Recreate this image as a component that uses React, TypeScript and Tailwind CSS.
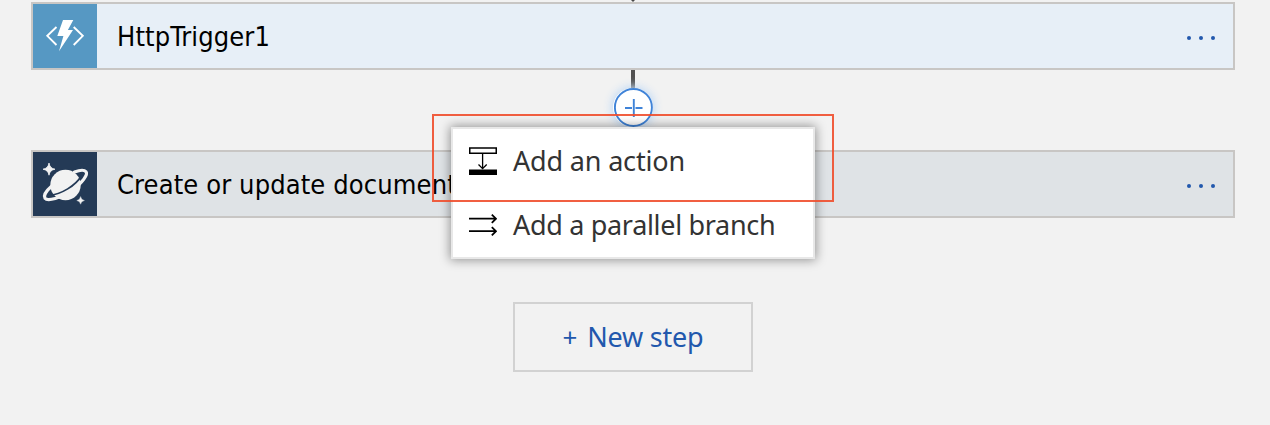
import React from "react";

function FunctionIcon() {
  return (
    <svg viewBox="0 0 64 64" className="h-16 w-16 shrink-0 bg-[#5698c3]">
      <path d="M23.5 23 14.3 31.8 23.5 41M40.7 23 49.8 31.8 40.7 41" fill="none" stroke="#fff" strokeWidth="1.9" />
      <path d="M30 16H40.3L34.9 26H40L26 47.3 30.4 32H24.3Z" fill="#fff" />
    </svg>
  );
}

function CosmosIcon() {
  return (
    <svg viewBox="0 0 64 64" className="h-16 w-16 shrink-0 bg-[#243a56]">
      <circle cx="32.5" cy="33" r="15.2" fill="#f2f2f2" />
      <path d="M16 43.500C28 42.500 43 33.500 48.500 23.500" fill="none" stroke="#243a56" strokeWidth="1.700" />
      <path
        d="M18.300 34.500C13 39 10.300 43.800 12 46.300C14.500 49.500 28 46 38.500 38.800C49.500 31 55.200 22.500 53 19.800C51.300 17.700 46 18.300 41.500 20"
        fill="none"
        stroke="#f2f2f2"
        strokeWidth="3.200"
        strokeLinecap="round"
      />
      <path d="M16 11Q16.8 16.4 22 17.2Q16.8 18 16 23.2Q15.200 18 10 17.2Q15.200 16.400 16 11Z" fill="#f2f2f2" stroke="#f2f2f2" strokeWidth=".8" />
      <path d="M47.600 44.600Q48.200 48 51.400 48.500Q48.200 49 47.600 52.200Q47 49 43.800 48.500Q47 48 47.600 44.600Z" fill="#f2f2f2" stroke="#f2f2f2" strokeWidth=".4" />
    </svg>
  );
}

function Dots() {
  return (
    <button aria-label="More" className="mr-[18px] mt-1 flex gap-2">
      <span className="h-1 w-1 rounded-full bg-[#2258ad]" />
      <span className="h-1 w-1 rounded-full bg-[#2258ad]" />
      <span className="h-1 w-1 rounded-full bg-[#2258ad]" />
    </button>
  );
}

function Step({ icon, title, tone }: { icon: React.ReactNode; title: string; tone: string }) {
  return (
    <div className={`flex h-[68px] w-[1204px] items-center border-2 border-[#c8c6c4] ${tone}`}>
      {icon}
      <div className="ml-5 flex-1 whitespace-nowrap pt-0.5 font-['DejaVu_Sans_Condensed','DejaVu_Sans',sans-serif] text-[27px] leading-8 tracking-[0.12px] text-black [font-stretch:condensed]">
        {title}
      </div>
      <Dots />
    </div>
  );
}

function ActionIcon() {
  return (
    <svg viewBox="0 0 28 28" className="h-7 w-7 shrink-0" fill="none" stroke="#000">
      <path d="M.75 1H27.250V6.250H.75Z" strokeWidth="1.500" />
      <path d="M13.600 7V21.500M9.500 17.500 13.600 21.600 17.700 17.500" strokeWidth="1.300" />
      <path d="M0 22.500H28V28H0Z" fill="#000" stroke="none" />
    </svg>
  );
}

function ParallelIcon() {
  return (
    <svg viewBox="0 0 28 28" className="h-7 w-7 shrink-0" fill="none" stroke="#000" strokeWidth="1.800">
      <path d="M0 7.700H27M22.800 3.600 27 7.700 22.800 11.800M0 20.200H27M22.800 16.100 27 20.200 22.800 24.300" />
    </svg>
  );
}

export default function App() {
  return (
    <main className="relative flex h-[425px] w-[1270px] flex-col items-start overflow-hidden bg-[#f2f2f2] pl-[31px] font-['Noto_Sans',sans-serif]">
      <svg viewBox="0 0 6 2" className="ml-[599px] h-0.5 w-1.5">
        <path d="M1 0H5L3 2Z" fill="#484848" />
      </svg>
      <Step icon={<FunctionIcon />} title="HttpTrigger1" tone="bg-[#e7eff7]" />
      <div className="flex h-20 w-[1204px] flex-col items-center">
        <div className="h-[18px] w-1 bg-[#515151]" />
        <div className="flex h-[39px] w-10 items-center justify-center rounded-full bg-white shadow-[0_0_8px_2px_#c5dcf5]">
          <svg viewBox="0 0 40 39" className="h-[39px] w-10" fill="none" stroke="#3f83d8">
            <circle cx="20.400" cy="19.500" r="18.500" strokeWidth="1.900" fill="#fff" />
            <path d="M12 20H19M22.500 20H29.500M20.800 11V29" strokeWidth="1.900" />
          </svg>
        </div>
      </div>
      <Step icon={<CosmosIcon />} title="Create or update document" tone="bg-[#dfe3e6]" />
      <button className="ml-[482px] mt-[84px] flex h-[70px] w-60 shrink-0 items-center justify-center gap-2.5 border-2 border-[#d2d2d2] text-[27px] tracking-[-0.2px] text-[#2258ad]">
        <span className="text-[26px]">+</span>
        <span>New step</span>
      </button>

      <div className="absolute left-[451px] top-[127px] h-[132px] w-[364px] border-2 border-[#e8e8e8] bg-white text-[27px] leading-8 text-[#333] shadow-[0_0_10px_1px_rgba(0,0,0,0.4)]">
        <div className="flex h-16 items-center gap-4 pl-4">
          <ActionIcon />
          <span className="whitespace-nowrap tracking-[-0.17px]">Add an action</span>
        </div>
        <div className="flex h-16 items-center gap-4 pl-4">
          <ParallelIcon />
          <span className="whitespace-nowrap tracking-[-0.32px]">Add a parallel branch</span>
        </div>
      </div>
      <div className="pointer-events-none absolute left-[432px] top-[114px] h-[88px] w-[402px] border-2 border-[#f04e2c]/90" />
    </main>
  );
}
